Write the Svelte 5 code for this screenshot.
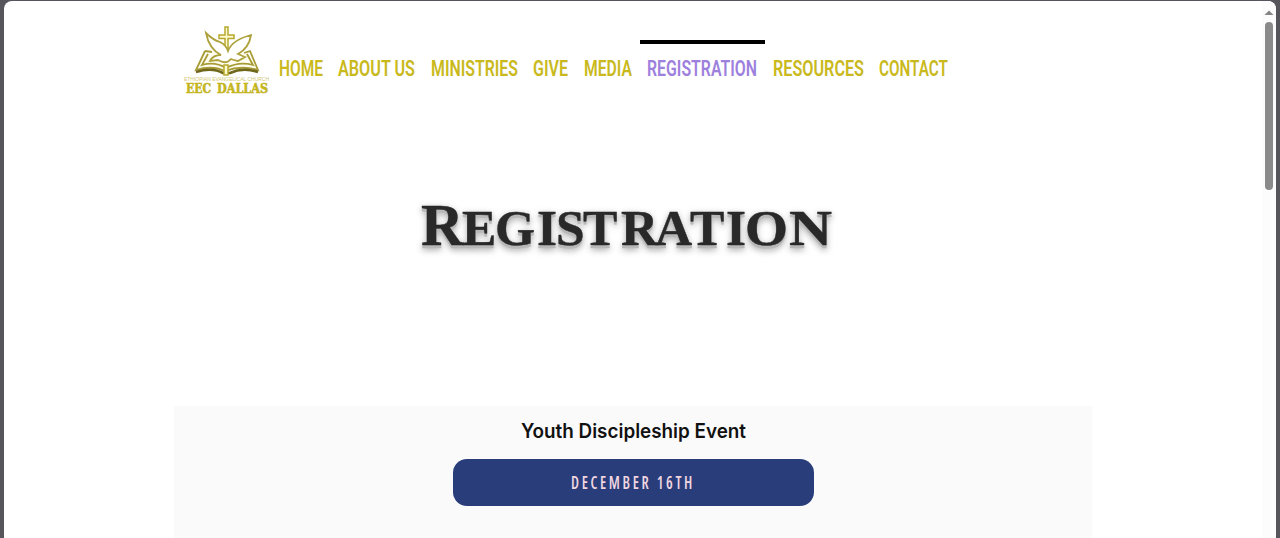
<script>
  const links = [
    { label: 'HOME', width: 44 },
    { label: 'ABOUT US', width: 77 },
    { label: 'MINISTRIES', width: 87 },
    { label: 'GIVE', width: 35 },
    { label: 'MEDIA', width: 48 },
    { label: 'REGISTRATION', width: 110, active: true },
    { label: 'RESOURCES', width: 91 },
    { label: 'CONTACT', width: 69 }
  ];
</script>

<div class="window">
  <main>
    <header>
      <svg class="logo" width="90" height="76" viewBox="0 0 90 76" aria-label="EEC Dallas">
        <g class="emblem">
          <path class="book" d="M21 28 L12 47 Q28 42 41 48 Q57 42 74 47 L66 28 L60 30 M21 28 L28 29 M24 31 L18 42 Q31 38 42 45 Q55 38 69 42 L63 31" />
          <path class="edge" d="M12 49 Q28 44 39 50 H46 Q59 44 74 49" />
          <path class="cross" d="M41 4 H44 V12 H50 V15.5 H44 V28 H41 V15.5 H35 V12 H41Z M40 42 H44 V52 H40Z" />
          <path class="dove" d="M22 10 Q29 17 36 19 Q42 22 44 28 Q48 17 67 12 Q65 25 54 31 L61 34 L54 38 Q49 37 47 36 Q42 42 34 37 L26 38 Q29 32 37 32 Q25 26 22 10Z" />
        </g>
        <text class="tiny" x="0" y="57.5" textLength="85" lengthAdjust="spacingAndGlyphs">ETHIOPIAN EVANGELICAL CHURCH</text>
        <text class="name" x="2" y="70" textLength="25" lengthAdjust="spacingAndGlyphs">EEC</text>
        <text class="name" x="33" y="70" textLength="51" lengthAdjust="spacingAndGlyphs">DALLAS</text>
      </svg>
      <nav>
        {#each links as link}
          <a class:active={link.active}>
            <svg width={link.width} height="24">
              <text x="0" y="19.5" textLength={link.width} lengthAdjust="spacingAndGlyphs">{link.label}</text>
            </svg>
          </a>
        {/each}
      </nav>
    </header>

    <h1>
      <svg width="430" height="80">
        <g>
          <text class="initial" x="0" y="54">R</text>
          <text y="54" x="41 74 116 135 162 200 234 269 305">EGISTRATI</text>
          <text x="324" y="54" textLength="43" lengthAdjust="spacingAndGlyphs">O</text>
          <text x="368" y="54" textLength="43" lengthAdjust="spacingAndGlyphs">N</text>
        </g>
      </svg>
    </h1>

    <section>
      <h2>
        <svg width="225" height="28">
          <text x="0" y="20" textLength="225" lengthAdjust="spacingAndGlyphs">Youth Discipleship Event</text>
        </svg>
      </h2>
      <button>
        <svg width="124" height="24">
          <text x="0" y="18" textLength="124" lengthAdjust="spacingAndGlyphs">DECEMBER 16TH</text>
        </svg>
      </button>
    </section>
  </main>
  <aside>
    <svg width="10" height="6"><path d="M0.5 5 L5 0.5 L9.5 5Z" /></svg>
    <div class="thumb"></div>
  </aside>
</div>

<style>
  :global(body) {
    background: #56555c;
    overflow: hidden;
  }
  .window {
    display: flex;
    height: 537px;
    margin: 1px 4px 0;
    background: #fff;
    border-radius: 8px 8px 0 0;
    overflow: hidden;
  }
  main {
    width: 1258px;
  }
  svg {
    display: block;
    overflow: visible;
  }
  header {
    display: flex;
    height: 170px;
    padding-left: 180px;
  }
  .logo {
    margin-top: 22px;
  }
  .book {
    fill: #fffef0;
    stroke: #a79b35;
    stroke-width: 1.8;
  }
  .edge {
    fill: none;
    stroke: #6f671c;
    stroke-width: 2.6;
  }
  .dove {
    fill: #fff;
    stroke: #aea23c;
    stroke-width: 1.8;
  }
  .cross {
    fill: #fffbd0;
    stroke: #b7a82c;
    stroke-width: 1.5;
  }
  .tiny {
    font: 5px "Liberation Sans", sans-serif;
    fill: #d0c774;
  }
  .name {
    font: bold 13.5px "DejaVu Serif", serif;
    fill: #c4b51f;
    stroke: #c4b51f;
    stroke-width: 0.6;
  }
  nav {
    display: flex;
    height: 60px;
    margin: 39px 0 0 -3px;
  }
  nav a {
    height: 40px;
    padding: 12px 7.75px 0;
    border-top: 4px solid transparent;
    fill: #c9b91c;
  }
  nav a.active {
    border-color: #000;
    fill: #9d80dd;
  }
  nav text {
    font: 600 22px Roboto, sans-serif;
  }
  h1 {
    margin: 20px 0 0 417px;
    height: 215px;
  }
  h1 g {
    filter: drop-shadow(0 3px 0 #b8b8b8) drop-shadow(0 2px 3px #00000050);
  }
  h1 text {
    font: bold 51.5px "Liberation Serif", serif;
    fill: #292929;
    stroke: #292929;
    stroke-width: 0.4;
  }
  h1 .initial {
    font-size: 59px;
  }
  section {
    display: flex;
    flex-direction: column;
    align-items: center;
    width: 918px;
    height: 140px;
    margin-left: 170px;
    background: #fafafa;
  }
  h2 {
    margin: 12px 0 13px;
  }
  h2 text {
    font: 600 19.5px Inter, sans-serif;
    fill: #111;
  }
  button {
    display: grid;
    place-items: center;
    width: 361px;
    height: 47px;
    padding: 0;
    border: 0;
    border-radius: 14px;
    background: #293d7a;
  }
  button text {
    font: 600 17px "Open Sans", sans-serif;
    font-stretch: 75%;
    letter-spacing: 3px;
    fill: #f0d6e0;
  }
  aside {
    width: 14px;
    background: #fcfcfc;
  }
  aside svg {
    margin: 9px 0 0 2px;
    fill: #858585;
  }
  .thumb {
    width: 8px;
    height: 168px;
    margin: 6px 0 0 3px;
    border-radius: 4px;
    background: #8a8a8a;
  }
</style>
